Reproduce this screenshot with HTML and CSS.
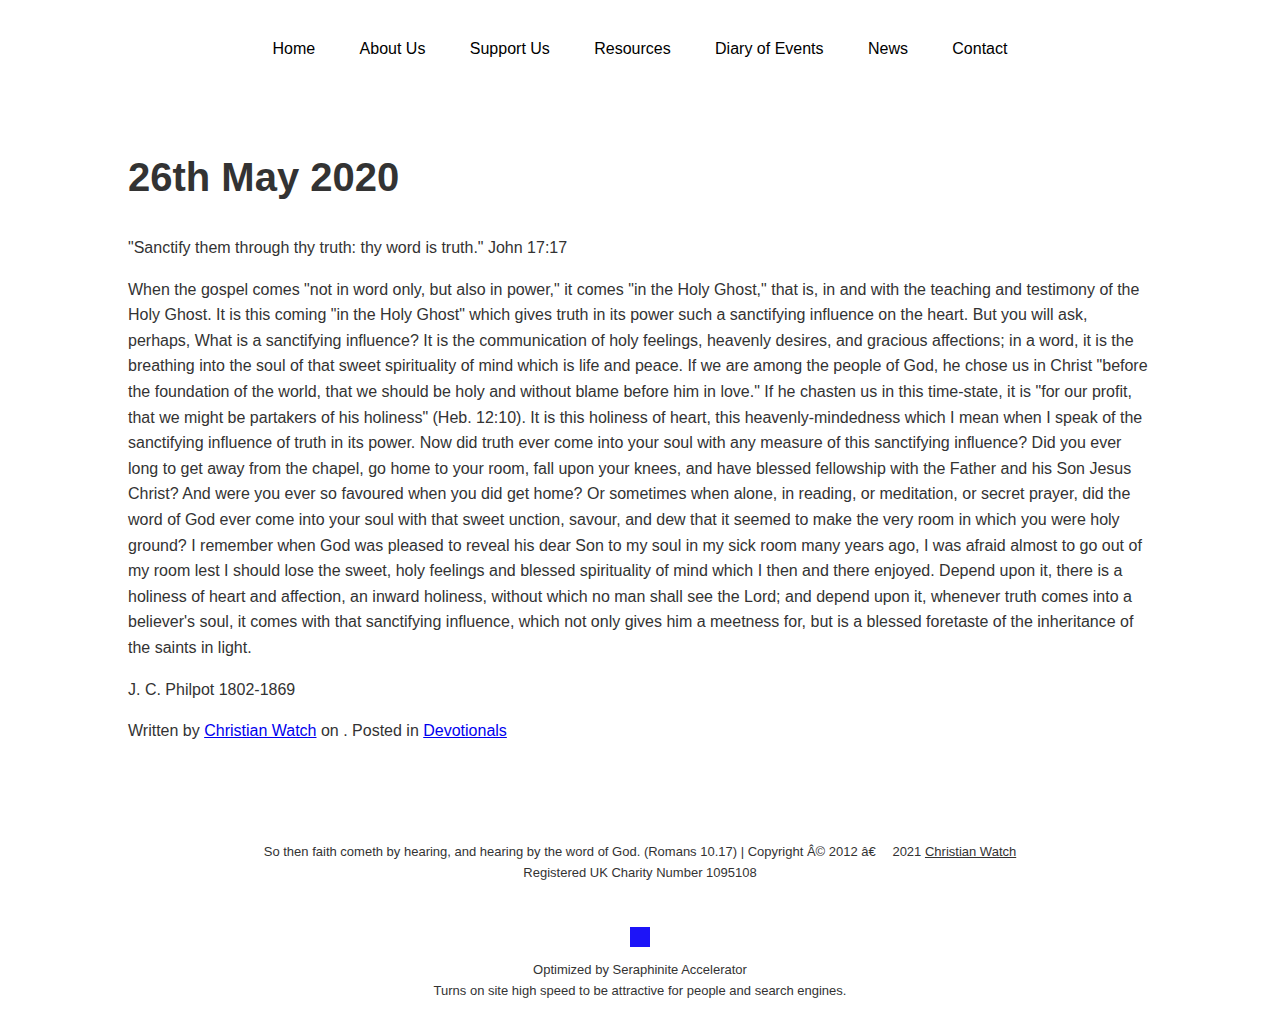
FILE: index.html
```html
<!DOCTYPE html>
<html lang="en">
<head>
<meta charset="utf-8">
<title>26th May 2020</title>
<link rel="stylesheet" href="styles.css">
</head>
<body>
<header class="site-header">
  <nav class="main-nav">
    <a href="#">Home</a>
    <a href="#">About Us</a>
    <a href="#">Support Us</a>
    <a href="#">Resources</a>
    <a href="#">Diary of Events</a>
    <a href="#">News</a>
    <a href="#">Contact</a>
  </nav>
</header>
<main class="content">
  <h1 class="title">26th May 2020</h1>
  <p>"Sanctify them through thy truth: thy word is truth." John 17:17</p>
  <p>When the gospel comes "not in word only, but also in power," it comes "in the Holy Ghost," that is, in and with the teaching and testimony of the Holy Ghost. It is this coming "in the Holy Ghost" which gives truth in its power such a sanctifying influence on the heart. But you will ask, perhaps, What is a sanctifying influence? It is the communication of holy feelings, heavenly desires, and gracious affections; in a word, it is the breathing into the soul of that sweet spirituality of mind which is life and peace. If we are among the people of God, he chose us in Christ "before the foundation of the world, that we should be holy and without blame before him in love." If he chasten us in this time-state, it is "for our profit, that we might be partakers of his holiness" (Heb. 12:10). It is this holiness of heart, this heavenly-mindedness which I mean when I speak of the sanctifying influence of truth in its power. Now did truth ever come into your soul with any measure of this sanctifying influence? Did you ever long to get away from the chapel, go home to your room, fall upon your knees, and have blessed fellowship with the Father and his Son Jesus Christ? And were you ever so favoured when you did get home? Or sometimes when alone, in reading, or meditation, or secret prayer, did the word of God ever come into your soul with that sweet unction, savour, and dew that it seemed to make the very room in which you were holy ground? I remember when God was pleased to reveal his dear Son to my soul in my sick room many years ago, I was afraid almost to go out of my room lest I should lose the sweet, holy feelings and blessed spirituality of mind which I then and there enjoyed. Depend upon it, there is a holiness of heart and affection, an inward holiness, without which no man shall see the Lord; and depend upon it, whenever truth comes into a believer's soul, it comes with that sanctifying influence, which not only gives him a meetness for, but is a blessed foretaste of the inheritance of the saints in light.</p>
  <p class="author">J. C. Philpot 1802-1869</p>
  <p class="meta">Written by <a href="#">Christian Watch</a> on . Posted in <a href="#">Devotionals</a></p>
</main>
<footer class="site-footer">
  <p class="copy">So then faith cometh by hearing, and hearing by the word of God. (Romans 10.17) | Copyright Â© 2012 â€<span class="gap"></span> 2021 <a href="#">Christian Watch</a><br>Registered UK Charity Number 1095108</p>
  <div class="badge"></div>
  <p class="optimized">Optimized by Seraphinite Accelerator<br>Turns on site high speed to be attractive for people and search engines.</p>
</footer>
</body>
</html>
```

FILE: styles.css
```css
html, body {
  margin: 0;
  padding: 0;
  background: #fff;
}
body {
  font-family: "Liberation Sans", Arial, sans-serif;
  color: #333;
  font-size: 16px;
  line-height: 1.6;
}
.site-header {
  padding-top: 36px;
}
.main-nav {
  display: flex;
  justify-content: center;
}
.main-nav a {
  color: #000;
  text-decoration: none;
  padding: 0 22.2px;
  font-size: 16px;
  line-height: 25.6px;
}
.content {
  width: 1024px;
  margin: 0 auto;
  padding-top: 91px;
}
.title {
  font-size: 40px;
  line-height: 48px;
  font-weight: bold;
  color: #333;
  margin: 0 0 34px;
}
.content p {
  margin: 0 0 16.4px;
  line-height: 25.6px;
}
.content p.author {
  margin-bottom: 15.4px;
}
.content a {
  color: #0000ee;
  text-decoration: underline;
}
.content p.meta {
  margin-bottom: 0;
}
.site-footer {
  text-align: center;
  font-size: 13px;
  line-height: 21px;
  color: #333;
  padding-top: 98px;
  padding-bottom: 20px;
}
.site-footer p {
  margin: 0;
}
.site-footer a {
  color: #333;
  text-decoration: underline;
}
.gap {
  display: inline-block;
  width: 13px;
}
.badge {
  width: 20px;
  height: 20px;
  background: #1d14f8;
  margin: 44px auto 12px;
}
```
